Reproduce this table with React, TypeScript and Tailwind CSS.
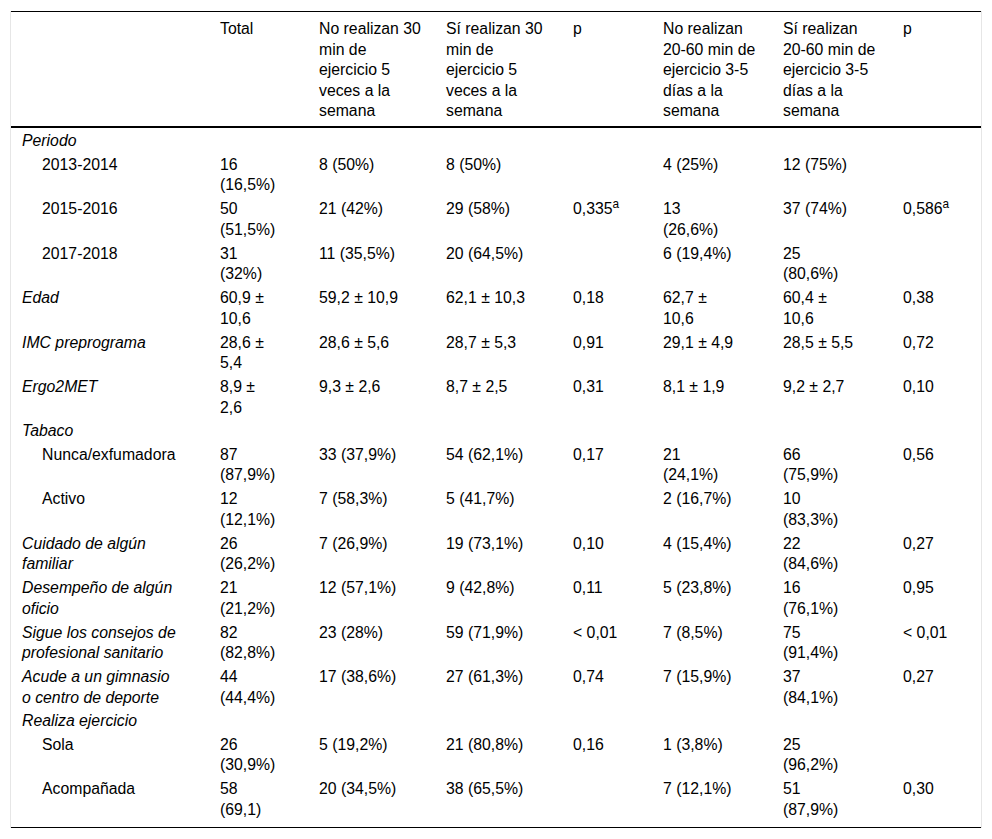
import React from 'react';

type Cell = React.ReactNode[];

type Row = {
  label: string[];
  italic?: boolean;
  indent?: boolean;
  cells?: Cell[];
};

const A = (v: string) => (
  <>
    {v}
    <sup>a</sup>
  </>
);

const header: string[][] = [
  [],
  ['Total'],
  ['No realizan 30', 'min de', 'ejercicio 5', 'veces a la', 'semana'],
  ['Sí realizan 30', 'min de', 'ejercicio 5', 'veces a la', 'semana'],
  ['p'],
  ['No realizan', '20-60 min de', 'ejercicio 3-5', 'días a la', 'semana'],
  ['Sí realizan', '20-60 min de', 'ejercicio 3-5', 'días a la', 'semana'],
  ['p'],
];

const rows: Row[] = [
  { label: ['Periodo'], italic: true },
  {
    label: ['2013-2014'],
    indent: true,
    cells: [['16', '(16,5%)'], ['8 (50%)'], ['8 (50%)'], [], ['4 (25%)'], ['12 (75%)'], []],
  },
  {
    label: ['2015-2016'],
    indent: true,
    cells: [['50', '(51,5%)'], ['21 (42%)'], ['29 (58%)'], [A('0,335')], ['13', '(26,6%)'], ['37 (74%)'], [A('0,586')]],
  },
  {
    label: ['2017-2018'],
    indent: true,
    cells: [['31', '(32%)'], ['11 (35,5%)'], ['20 (64,5%)'], [], ['6 (19,4%)'], ['25', '(80,6%)'], []],
  },
  {
    label: ['Edad'],
    italic: true,
    cells: [['60,9 ±', '10,6'], ['59,2 ± 10,9'], ['62,1 ± 10,3'], ['0,18'], ['62,7 ±', '10,6'], ['60,4 ±', '10,6'], ['0,38']],
  },
  {
    label: ['IMC preprograma'],
    italic: true,
    cells: [['28,6 ±', '5,4'], ['28,6 ± 5,6'], ['28,7 ± 5,3'], ['0,91'], ['29,1 ± 4,9'], ['28,5 ± 5,5'], ['0,72']],
  },
  {
    label: ['Ergo2MET'],
    italic: true,
    cells: [['8,9 ±', '2,6'], ['9,3 ± 2,6'], ['8,7 ± 2,5'], ['0,31'], ['8,1 ± 1,9'], ['9,2 ± 2,7'], ['0,10']],
  },
  { label: ['Tabaco'], italic: true },
  {
    label: ['Nunca/exfumadora'],
    indent: true,
    cells: [['87', '(87,9%)'], ['33 (37,9%)'], ['54 (62,1%)'], ['0,17'], ['21', '(24,1%)'], ['66', '(75,9%)'], ['0,56']],
  },
  {
    label: ['Activo'],
    indent: true,
    cells: [['12', '(12,1%)'], ['7 (58,3%)'], ['5 (41,7%)'], [], ['2 (16,7%)'], ['10', '(83,3%)'], []],
  },
  {
    label: ['Cuidado de algún', 'familiar'],
    italic: true,
    cells: [['26', '(26,2%)'], ['7 (26,9%)'], ['19 (73,1%)'], ['0,10'], ['4 (15,4%)'], ['22', '(84,6%)'], ['0,27']],
  },
  {
    label: ['Desempeño de algún', 'oficio'],
    italic: true,
    cells: [['21', '(21,2%)'], ['12 (57,1%)'], ['9 (42,8%)'], ['0,11'], ['5 (23,8%)'], ['16', '(76,1%)'], ['0,95']],
  },
  {
    label: ['Sigue los consejos de', 'profesional sanitario'],
    italic: true,
    cells: [['82', '(82,8%)'], ['23 (28%)'], ['59 (71,9%)'], ['< 0,01'], ['7 (8,5%)'], ['75', '(91,4%)'], ['< 0,01']],
  },
  {
    label: ['Acude a un gimnasio', 'o centro de deporte'],
    italic: true,
    cells: [['44', '(44,4%)'], ['17 (38,6%)'], ['27 (61,3%)'], ['0,74'], ['7 (15,9%)'], ['37', '(84,1%)'], ['0,27']],
  },
  { label: ['Realiza ejercicio'], italic: true },
  {
    label: ['Sola'],
    indent: true,
    cells: [['26', '(30,9%)'], ['5 (19,2%)'], ['21 (80,8%)'], ['0,16'], ['1 (3,8%)'], ['25', '(96,2%)'], []],
  },
  {
    label: ['Acompañada'],
    indent: true,
    cells: [['58', '(69,1)'], ['20 (34,5%)'], ['38 (65,5%)'], [], ['7 (12,1%)'], ['51', '(87,9%)'], ['0,30']],
  },
];

const widths = ['w-[198px]', 'w-[99px]', 'w-[127px]', 'w-[127px]', 'w-[90px]', 'w-[120px]', 'w-[120px]', 'w-[89px]'];

function Lines({ lines }: { lines: React.ReactNode[] }) {
  return (
    <>
      {lines.map((l, i) => (
        <div key={i}>{l}</div>
      ))}
    </>
  );
}

export default function App() {
  return (
    <div className="min-h-screen bg-white pt-[11px] pl-[10px]">
      <div className="w-[972px] border-x border-[#e6e6e6]">
        <table className="w-[970px] table-fixed border-collapse border-y border-black text-left font-['Liberation_Sans',Arial,sans-serif] text-[15.8px] leading-[20.5px] text-black">
          <colgroup>
            {widths.map((w, i) => (
              <col key={i} className={w} />
            ))}
          </colgroup>
          <thead>
            <tr>
              {header.map((h, i) => (
                <th
                  key={i}
                  className="border-b-2 border-black pt-[7px] pb-[4.5px] pl-[11px] pr-1 align-top font-normal whitespace-nowrap"
                >
                  <Lines lines={h} />
                </th>
              ))}
            </tr>
          </thead>
          <tbody>
            {rows.map((r, ri) => {
              const last = ri === rows.length - 1;
              const pad = !r.cells ? 'pt-[2.5px] pb-0' : last ? 'pt-[3.5px] pb-[6.5px]' : 'pt-[3.5px] pb-0';
              return (
                <tr key={ri}>
                  <td
                    className={`${pad} pr-1 align-top whitespace-nowrap ${r.indent ? 'pl-[31px]' : 'pl-[11px]'} ${r.italic ? 'italic' : ''}`}
                  >
                    <Lines lines={r.label} />
                  </td>
                  {(r.cells ?? [[], [], [], [], [], [], []]).map((c, ci) => (
                    <td key={ci} className={`${pad} pl-[11px] pr-1 align-top whitespace-nowrap`}>
                      <Lines lines={c} />
                    </td>
                  ))}
                </tr>
              );
            })}
          </tbody>
        </table>
      </div>
    </div>
  );
}
